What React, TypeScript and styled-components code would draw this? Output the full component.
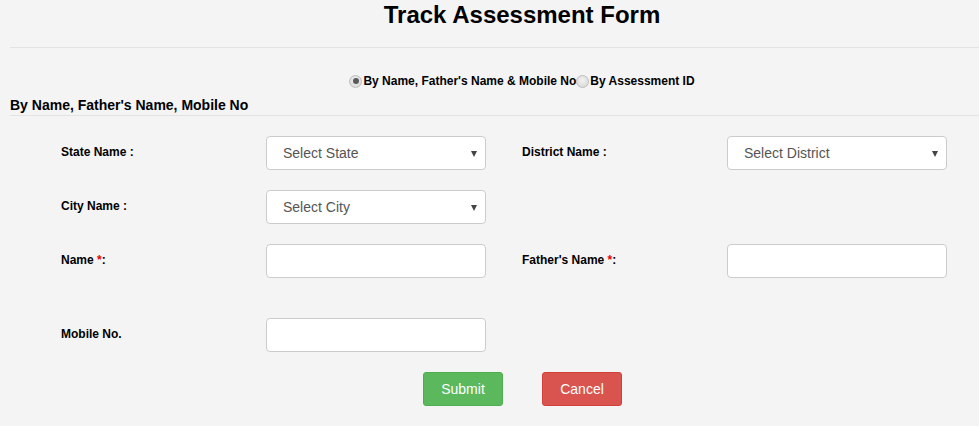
import React from "react";
import styled, { createGlobalStyle } from "styled-components";

const Global = createGlobalStyle`
  html, body { margin: 0; padding: 0; background: #f4f4f4; overflow: hidden; }
  body { font-family: "Liberation Sans", Arial, sans-serif; color: #000; }
`;

const Page = styled.div`
  margin-left: 10px;
`;

const Title = styled.h1`
  margin: 0;
  padding: 1px 0 0 55px;
  height: 46px;
  font-size: 24px;
  font-weight: bold;
  text-align: center;
  line-height: 28px;
  border-bottom: 1px solid #e3e3e3;
`;

const RadioRow = styled.div`
  display: flex;
  justify-content: center;
  align-items: center;
  margin-top: 25px;
  padding-left: 55px;
  height: 16px;
  font-size: 12px;
  font-weight: bold;
`;

const RadioLabel = styled.label`
  display: flex;
  align-items: center;
`;

const RadioDot = styled.span<{ $checked?: boolean }>`
  box-sizing: border-box;
  width: 13px;
  height: 13px;
  border-radius: 50%;
  border: 1px solid #bdbdbd;
  background: radial-gradient(circle at 50% 40%, #f2f2f2, #d4d4d4);
  display: inline-flex;
  align-items: center;
  justify-content: center;
  margin-right: 1px;
  &::after {
    content: "";
    width: 6px;
    height: 6px;
    border-radius: 50%;
    background: ${(p) => (p.$checked ? "#5a5a5a" : "transparent")};
  }
`;

const SectionHead = styled.h2`
  margin: 7px 0 0;
  font-size: 14px;
  font-weight: bold;
  line-height: 18px;
  padding-bottom: 1px;
  border-bottom: 1px solid #e3e3e3;
`;

const Form = styled.div`
  padding: 20px 0 0 51px;
  display: flex;
  flex-direction: column;
`;

const Row = styled.div<{ $gap?: number }>`
  display: flex;
  gap: 36px;
  margin-bottom: ${(p) => p.$gap ?? 20}px;
`;

const Field = styled.div`
  display: flex;
  align-items: center;
  height: 34px;
`;

const Label = styled.span`
  width: 205px;
  font-size: 12px;
  font-weight: bold;
  margin-top: -2px;
`;

const Req = styled.span`
  color: #e00;
`;

const SelectBox = styled.div`
  box-sizing: border-box;
  width: 220px;
  height: 34px;
  background: #fff;
  border: 1px solid #ccc;
  border-radius: 4px;
  display: flex;
  align-items: center;
  padding: 0 8px 0 16px;
  font-size: 14px;
  color: #555;
  justify-content: space-between;
`;

const Arrow = styled.span`
  width: 0;
  height: 0;
  border-left: 3.5px solid transparent;
  border-right: 3.5px solid transparent;
  border-top: 6px solid #444;
  margin-top: 1px;
`;

const TextInput = styled.input`
  box-sizing: border-box;
  width: 220px;
  height: 34px;
  background: #fff;
  border: 1px solid #ccc;
  border-radius: 4px;
  padding: 0 12px;
  font-size: 14px;
  font-family: inherit;
`;

const Buttons = styled.div`
  display: flex;
  justify-content: center;
  gap: 39px;
  padding-left: 5px;
`;

const Btn = styled.button<{ $variant: "ok" | "cancel" }>`
  width: 80px;
  height: 34px;
  border-radius: 3px;
  font-size: 14px;
  font-family: inherit;
  color: #fff;
  background: ${(p) => (p.$variant === "ok" ? "#5cb85c" : "#d9534f")};
  border: 1px solid ${(p) => (p.$variant === "ok" ? "#4cae4c" : "#d43f3a")};
  padding: 0;
`;

const Select = ({ text }: { text: string }) => (
  <SelectBox>
    <span>{text}</span>
    <Arrow />
  </SelectBox>
);

export default function App() {
  return (
    <Page>
      <Global />
      <Title>Track Assessment Form</Title>
      <RadioRow>
        <RadioLabel>
          <RadioDot $checked />
          By Name, Father's Name &amp; Mobile No
        </RadioLabel>
        <RadioLabel>
          <RadioDot />
          By Assessment ID
        </RadioLabel>
      </RadioRow>
      <SectionHead>By Name, Father's Name, Mobile No</SectionHead>
      <Form>
        <Row>
          <Field>
            <Label>State Name :</Label>
            <Select text="Select State" />
          </Field>
          <Field>
            <Label>District Name :</Label>
            <Select text="Select District" />
          </Field>
        </Row>
        <Row>
          <Field>
            <Label>City Name :</Label>
            <Select text="Select City" />
          </Field>
        </Row>
        <Row $gap={40}>
          <Field>
            <Label>
              Name <Req>*</Req>:
            </Label>
            <TextInput />
          </Field>
          <Field>
            <Label>
              Father's Name <Req>*</Req>:
            </Label>
            <TextInput />
          </Field>
        </Row>
        <Row>
          <Field>
            <Label>Mobile No.</Label>
            <TextInput />
          </Field>
        </Row>
        <Buttons>
          <Btn $variant="ok">Submit</Btn>
          <Btn $variant="cancel">Cancel</Btn>
        </Buttons>
      </Form>
    </Page>
  );
}
